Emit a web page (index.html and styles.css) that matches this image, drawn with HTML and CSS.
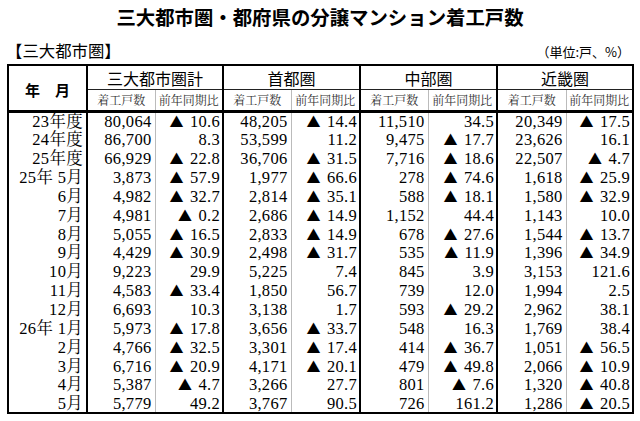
FILE: index.html
```html
<!DOCTYPE html>
<html lang="ja">
<head>
<meta charset="utf-8">
<title>三大都市圏・都府県の分譲マンション着工戸数</title>
<link rel="stylesheet" href="styles.css">
</head>
<body>
<div class="page">
  <h1 class="title">三大都市圏・都府県の分譲マンション着工戸数</h1>
  <div class="sub">
    <span class="section">【三大都市圏】</span>
    <span class="unit">（単位:戸、%）</span>
  </div>
  <table class="data">
    <colgroup>
      <col class="c-label">
      <col class="c-a"><col class="c-b">
      <col class="c-a"><col class="c-b2">
      <col class="c-a"><col class="c-b2">
      <col class="c-b2"><col class="c-last">
    </colgroup>
    <thead>
      <tr class="h1">
        <th class="ym" rowspan="2">年　月</th>
        <th class="grp" colspan="2">三大都市圏計</th>
        <th class="grp" colspan="2">首都圏</th>
        <th class="grp" colspan="2">中部圏</th>
        <th class="grp" colspan="2">近畿圏</th>
      </tr>
      <tr class="h2">
        <th class="cnt">着工戸数</th><th class="rat">前年同期比</th>
        <th class="cnt">着工戸数</th><th class="rat">前年同期比</th>
        <th class="cnt">着工戸数</th><th class="rat">前年同期比</th>
        <th class="cnt">着工戸数</th><th class="rat">前年同期比</th>
      </tr>
    </thead>
    <tbody>
      <tr><td class="lbl">23年度</td><td class="cnt">80,064</td><td class="rat"><span class="tri">▲</span> 10.6</td><td class="cnt">48,205</td><td class="rat"><span class="tri">▲</span> 14.4</td><td class="cnt">11,510</td><td class="rat">34.5</td><td class="cnt">20,349</td><td class="rat"><span class="tri">▲</span> 17.5</td></tr>
      <tr><td class="lbl">24年度</td><td class="cnt">86,700</td><td class="rat">8.3</td><td class="cnt">53,599</td><td class="rat">11.2</td><td class="cnt">9,475</td><td class="rat"><span class="tri">▲</span> 17.7</td><td class="cnt">23,626</td><td class="rat">16.1</td></tr>
      <tr><td class="lbl">25年度</td><td class="cnt">66,929</td><td class="rat"><span class="tri">▲</span> 22.8</td><td class="cnt">36,706</td><td class="rat"><span class="tri">▲</span> 31.5</td><td class="cnt">7,716</td><td class="rat"><span class="tri">▲</span> 18.6</td><td class="cnt">22,507</td><td class="rat"><span class="tri">▲</span> 4.7</td></tr>
      <tr><td class="lbl">25年 5月</td><td class="cnt">3,873</td><td class="rat"><span class="tri">▲</span> 57.9</td><td class="cnt">1,977</td><td class="rat"><span class="tri">▲</span> 66.6</td><td class="cnt">278</td><td class="rat"><span class="tri">▲</span> 74.6</td><td class="cnt">1,618</td><td class="rat"><span class="tri">▲</span> 25.9</td></tr>
      <tr><td class="lbl">6月</td><td class="cnt">4,982</td><td class="rat"><span class="tri">▲</span> 32.7</td><td class="cnt">2,814</td><td class="rat"><span class="tri">▲</span> 35.1</td><td class="cnt">588</td><td class="rat"><span class="tri">▲</span> 18.1</td><td class="cnt">1,580</td><td class="rat"><span class="tri">▲</span> 32.9</td></tr>
      <tr><td class="lbl">7月</td><td class="cnt">4,981</td><td class="rat"><span class="tri">▲</span> 0.2</td><td class="cnt">2,686</td><td class="rat"><span class="tri">▲</span> 14.9</td><td class="cnt">1,152</td><td class="rat">44.4</td><td class="cnt">1,143</td><td class="rat">10.0</td></tr>
      <tr><td class="lbl">8月</td><td class="cnt">5,055</td><td class="rat"><span class="tri">▲</span> 16.5</td><td class="cnt">2,833</td><td class="rat"><span class="tri">▲</span> 14.9</td><td class="cnt">678</td><td class="rat"><span class="tri">▲</span> 27.6</td><td class="cnt">1,544</td><td class="rat"><span class="tri">▲</span> 13.7</td></tr>
      <tr><td class="lbl">9月</td><td class="cnt">4,429</td><td class="rat"><span class="tri">▲</span> 30.9</td><td class="cnt">2,498</td><td class="rat"><span class="tri">▲</span> 31.7</td><td class="cnt">535</td><td class="rat"><span class="tri">▲</span> 11.9</td><td class="cnt">1,396</td><td class="rat"><span class="tri">▲</span> 34.9</td></tr>
      <tr><td class="lbl">10月</td><td class="cnt">9,223</td><td class="rat">29.9</td><td class="cnt">5,225</td><td class="rat">7.4</td><td class="cnt">845</td><td class="rat">3.9</td><td class="cnt">3,153</td><td class="rat">121.6</td></tr>
      <tr><td class="lbl">11月</td><td class="cnt">4,583</td><td class="rat"><span class="tri">▲</span> 33.4</td><td class="cnt">1,850</td><td class="rat">56.7</td><td class="cnt">739</td><td class="rat">12.0</td><td class="cnt">1,994</td><td class="rat">2.5</td></tr>
      <tr><td class="lbl">12月</td><td class="cnt">6,693</td><td class="rat">10.3</td><td class="cnt">3,138</td><td class="rat">1.7</td><td class="cnt">593</td><td class="rat"><span class="tri">▲</span> 29.2</td><td class="cnt">2,962</td><td class="rat">38.1</td></tr>
      <tr><td class="lbl">26年 1月</td><td class="cnt">5,973</td><td class="rat"><span class="tri">▲</span> 17.8</td><td class="cnt">3,656</td><td class="rat"><span class="tri">▲</span> 33.7</td><td class="cnt">548</td><td class="rat">16.3</td><td class="cnt">1,769</td><td class="rat">38.4</td></tr>
      <tr><td class="lbl">2月</td><td class="cnt">4,766</td><td class="rat"><span class="tri">▲</span> 32.5</td><td class="cnt">3,301</td><td class="rat"><span class="tri">▲</span> 17.4</td><td class="cnt">414</td><td class="rat"><span class="tri">▲</span> 36.7</td><td class="cnt">1,051</td><td class="rat"><span class="tri">▲</span> 56.5</td></tr>
      <tr><td class="lbl">3月</td><td class="cnt">6,716</td><td class="rat"><span class="tri">▲</span> 20.9</td><td class="cnt">4,171</td><td class="rat"><span class="tri">▲</span> 20.1</td><td class="cnt">479</td><td class="rat"><span class="tri">▲</span> 49.8</td><td class="cnt">2,066</td><td class="rat"><span class="tri">▲</span> 10.9</td></tr>
      <tr><td class="lbl">4月</td><td class="cnt">5,387</td><td class="rat"><span class="tri">▲</span> 4.7</td><td class="cnt">3,266</td><td class="rat">27.7</td><td class="cnt">801</td><td class="rat"><span class="tri">▲</span> 7.6</td><td class="cnt">1,320</td><td class="rat"><span class="tri">▲</span> 40.8</td></tr>
      <tr><td class="lbl">5月</td><td class="cnt">5,779</td><td class="rat">49.2</td><td class="cnt">3,767</td><td class="rat">90.5</td><td class="cnt">726</td><td class="rat">161.2</td><td class="cnt">1,286</td><td class="rat"><span class="tri">▲</span> 20.5</td></tr>
    </tbody>
  </table>
</div>
</body>
</html>
```

FILE: styles.css
```css
html, body {
  margin: 0;
  padding: 0;
  background: #fff;
  color: #000;
}

.page {
  width: 640px;
  padding-top: 7px;
  font-family: "Noto Sans CJK JP", sans-serif;
}

.title {
  margin: 0;
  font-size: 19.4px;
  line-height: 20px;
  font-weight: 700;
  text-align: center;
}

.sub {
  display: flex;
  justify-content: space-between;
  align-items: flex-end;
  margin: 15px 10px 0 6px;
  height: 16px;
}

.section {
  font-size: 16.4px;
  line-height: 16px;
}

.unit {
  font-size: 13px;
  line-height: 13px;
}

.data {
  margin: 6px 0 0 7px;
  width: 625px;
  table-layout: fixed;
  border-collapse: collapse;
  border: 2px solid #000;
}

.c-label { width: 79px; }
.c-a { width: 68px; }
.c-b { width: 68px; }
.c-b2 { width: 69px; }
.c-last { width: 67px; }

.data th {
  padding: 0;
  font-weight: 400;
  text-align: center;
  vertical-align: middle;
}

.h1 th {
  height: 23px;
  font-size: 16px;
  line-height: 16px;
  border-bottom: 1px solid #222;
}

.h1 th.ym {
  font-size: 15px;
  font-weight: 700;
  padding-top: 3px;
  border-right: 2px solid #000;
  border-bottom: 3px solid #000;
}

.h1 th.grp {
  border-right: 2px solid #000;
}

.h2 th {
  height: 20px;
  font-family: "Noto Serif CJK JP", "Noto Sans CJK JP", serif;
  font-size: 12px;
  line-height: 12px;
  color: #333;
  border-bottom: 3px solid #000;
}

.data .cnt {
  border-right: 1px solid #bbb;
}

.data .rat {
  border-right: 2px solid #000;
}

.data tbody tr {
  height: 18.87px;
}

.data td {
  padding: 0 3px 0 0;
  font-family: "Liberation Serif", "Noto Serif CJK JP", "Noto Sans CJK JP", serif;
  font-size: 16.5px;
  line-height: 17px;
  text-align: right;
  vertical-align: middle;
  white-space: nowrap;
  letter-spacing: 0.3px;
}

.data td.lbl {
  border-right: 2px solid #000;
}

.data td.rat {
  padding-right: 2px;
}

.tri {
  font-family: "Noto Sans CJK JP", sans-serif;
  font-size: 14px;
  letter-spacing: 0;
  margin-right: 2px;
}
```
